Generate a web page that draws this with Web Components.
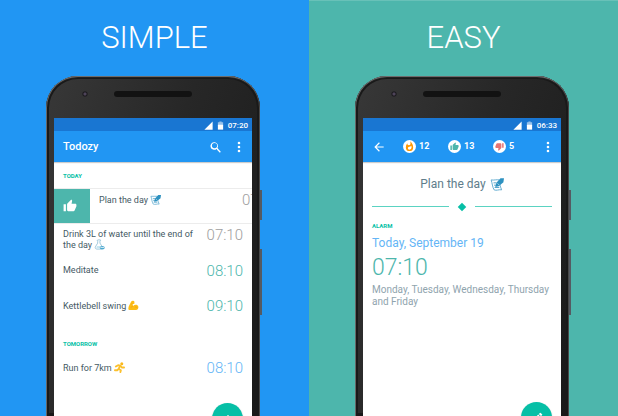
<!DOCTYPE html>
<html lang="en">
<head>
<meta charset="utf-8">
<title>Todozy</title>
<style>
html, body { margin: 0; height: 100%; }
body { font-family: Roboto, "Noto Sans", sans-serif; overflow: hidden; }
</style>
</head>
<body>
<promo-page>
  <promo-panel heading="SIMPLE" style="--bg:#2196f3;--edge:#2196f3">
    <phone-frame clock="07:20" style="--fab-drop:-18px">
      <app-bar slot="bar">
        <app-title>Todozy</app-title>
        <icon-button icon="search" label="Search"></icon-button>
        <icon-button icon="more" label="More options"></icon-button>
      </app-bar>
      <task-list></task-list>
      <fab-button slot="fab" icon="plus" label="Add task"></fab-button>
    </phone-frame>
  </promo-panel>
  <promo-panel heading="EASY" style="--bg:#4db6ac;--edge:#68c1b8">
    <phone-frame clock="06:33" style="--fab-drop:-17px">
      <app-bar slot="bar">
        <icon-button icon="back" label="Back"></icon-button>
        <stat-strip></stat-strip>
        <icon-button icon="more" label="More options"></icon-button>
      </app-bar>
      <task-detail></task-detail>
      <fab-button slot="fab" icon="pencil" label="Edit task"></fab-button>
    </phone-frame>
  </promo-panel>
</promo-page>

<script>
const THUMB = 'M1 21h4V9H1v12zm22-11c0-1.100-.9-2-2-2h-6.310l.95-4.570.03-.32c0-.41-.17-.79-.44-1.060L14.170 1 7.590 7.590C7.220 7.950 7 8.450 7 9v10c0 1.100.9 2 2 2h9c.83 0 1.540-.5 1.840-1.220l3.020-7.050c.09-.23.14-.47.14-.73v-2z';
const ICONS = {
  search: '<path fill="currentColor" d="M15.500 14h-.79l-.28-.27A6.500 6.500 0 1 0 13 15.300l.7.700v.8l5 5 1.500-1.500-4.700-5.300zM9.500 14a4.500 4.500 0 1 1 0-9 4.500 4.500 0 0 1 0 9z"/>',
  more: '<g fill="currentColor"><circle cx="12" cy="5" r="2.200"/><circle cx="12" cy="12" r="2.200"/><circle cx="12" cy="19" r="2.200"/></g>',
  back: '<path fill="currentColor" d="M20 11H7.800l5.600-5.600L12 4l-8 8 8 8 1.400-1.400L7.800 13H20v-2z"/>',
  plus: '<path fill="currentColor" d="M19 13h-6v6h-2v-6H5v-2h6V5h2v6h6v2z"/>',
  pencil: '<path fill="currentColor" d="M3 17.250V21h3.750L17.800 9.900l-3.700-3.700L3 17.250zM20.700 7c.4-.4.4-1 0-1.400l-2.300-2.300a1 1 0 0 0-1.400 0l-1.800 1.800 3.700 3.700L20.700 7z"/>',
  thumb: `<path fill="currentColor" d="${THUMB}"/>`,
  down: `<path fill="currentColor" transform="rotate(180 12 12)" d="${THUMB}"/>`,
  flame: '<path fill="currentColor" d="M13.500.7s.7 2.600.7 4.800c0 2-1.300 3.700-3.400 3.700S7.200 7.500 7.200 5.500v-.4A13 13 0 0 0 4 14a8 8 0 0 0 16 0c0-5.400-2.600-10.200-6.500-13.300zM11.700 19c-1.800 0-3.200-1.400-3.200-3.100 0-1.600 1-2.800 2.800-3.100 1.800-.4 3.600-1.200 4.600-2.600.4 1.300.6 2.700.6 4.100A4.800 4.800 0 0 1 11.700 19z"/>',
  signal: '<path fill="currentColor" d="M1 23L23 1v22z"/>',
  battery: '<path fill="#fff" fill-opacity=".55" d="M9 1h6v2h4v9H5V3h4z"/><path fill="#fff" d="M5 10h14v13H5z"/>',
  memo: '<path fill="#fff" stroke="#5ba9cf" stroke-width="1.600" d="M2 5c5 1 9-1 14 0 0 6 1 10 4 17-5-1-9 2-13 0C4 17 4 11 2 5z"/><path stroke="#4b9fc8" stroke-width="1.600" fill="none" d="M6 10h5M7 14h4M8 18h8"/><path fill="#2d91c0" d="M9 17l2-7 7-8 6 0-1 7-8 7z"/><path stroke="#fff" d="M13 11l3 3"/>',
  bottle: '<path fill="#fff" stroke="#78b2cd" stroke-width="1.500" d="M8 2h6v2l-1 1v4l5 8c1 3-1 5-3 5H6c-3 0-4-3-3-5l5-8V5L7 4z"/><path fill="#c9e7f2" d="M6 15h8l2 5H5z"/><ellipse cx="18" cy="19" rx="5.500" ry="3.800" fill="#4ba8cf"/><path fill="#fff" d="M14 18h8v1.500h-8z"/>',
  arm: '<path fill="#fcbd17" d="M2 13L7 3c2-2 6-2 7 1v4l-4 1 1 4c4-4 9-3 11 0 2 5-1 9-6 9H2c-2-2-1-6 0-9z"/><path stroke="#ed9a12" stroke-width="1.500" fill="none" d="M10 8l-3 1M10 13c-1 2-2 3-4 3M15 16c2-2 4-1 5 1"/>',
  runner: '<circle cx="17" cy="4" r="3.300" fill="#fbb81b"/><path fill="none" stroke="#fbc02d" stroke-width="4" stroke-linejoin="round" stroke-linecap="round" d="M4 10l5-3 5 1 3 4 5 0M13 9l-3 6 5 3-1 4M10 15l-3 3H2"/>'
};
const icon = n => `<svg class="i i-${n}" viewBox="0 0 24 24" aria-hidden="true">${ICONS[n]}</svg>`;
function define(name, render) {
  customElements.define(name, class extends HTMLElement {
    constructor() { super(); this.attachShadow({ mode: 'open' }); }
    connectedCallback() {
      const t = document.createElement('template');
      t.innerHTML = '<style>*{box-sizing:border-box}.i{display:block;flex:none}</style>' + render(this);
      this.shadowRoot.replaceChildren(t.content.cloneNode(true));
    }
  });
}
const at = (el, n) => el.getAttribute(n) || '';

define('promo-page', () => `<style>
:host{display:grid;grid-template-columns:1fr 1fr;height:100vh}
</style><slot></slot>`);

define('promo-panel', el => `<style>
:host{display:flex;flex-direction:column;min-height:0;overflow:hidden;background:var(--bg);box-shadow:inset 0 1px var(--edge)}
h1{margin:0;padding:19px 0;font-size:31px;line-height:38px;font-weight:350;color:#fff;text-align:center}
div{flex:1;min-height:0;display:flex;padding:0 49px 0 46px}
</style><h1>${at(el, 'heading')}</h1><div><slot></slot></div>`);

define('phone-frame', el => `<style>
:host{flex:1;display:flex;flex-direction:column;position:relative;min-width:0;padding:0 8px;
 border-radius:32px 32px 0 0;background:linear-gradient(110deg,#383838,#272727 45%,#191919);
 box-shadow:inset 0 2px 1px -1px #777,inset 1px 0 #666,inset -1px 0 #484848,inset 0 0 0 3px #191919}
.top{height:42px;flex:none;display:grid;grid-template-columns:1fr 78px 1fr;align-items:center;padding-bottom:6px}
.cam{width:6px;height:6px;border-radius:50%;justify-self:center;margin-left:2px;background:radial-gradient(#4e4459 20%,#1d1b1f 50%,#3f3f41)}
.spk{height:6px;border-radius:3px;background:radial-gradient(#292929 30%,#121212 50%) 0 0/2px 2px}
.side{position:absolute;left:100%;width:2px;background:#555a62}
.power{top:114px;height:30px}.vol{top:173px;height:66px}
.screen{flex:1;min-height:0;display:flex;flex-direction:column;position:relative;overflow:hidden;background:#fff}
.status{height:13px;flex:none;display:flex;align-items:center;justify-content:flex-end;gap:3px;padding:1px 4px 0 0;background:#1976d2;color:#fff;font-size:8px;line-height:13px;font-weight:500}
.i{width:9px;height:9px}
.fab{position:absolute;right:9px;bottom:var(--fab-drop)}
</style>
<div class="top"><span class="cam"></span><span class="spk"></span></div>
<span class="side power"></span><span class="side vol"></span>
<div class="screen"><div class="status">${icon('signal')}${icon('battery')}<span>${at(el, 'clock')}</span></div>
<slot name="bar"></slot><slot></slot><div class="fab"><slot name="fab"></slot></div></div>`);

define('app-bar', () => `<style>
:host{display:flex;flex:none;align-items:center;height:31px;padding:0 6px 0 9px;gap:9px;background:#2196f3;color:#fff;box-shadow:0 1px 1px #0003}
</style><slot></slot>`);

define('app-title', () => `<style>
:host{flex:1}h2{margin:0;font-size:11px;line-height:16px;font-weight:500}
</style><h2><slot></slot></h2>`);

define('icon-button', el => `<style>
:host{display:block}
button{display:block;border:0;padding:0;background:none;color:inherit}
.i{width:14px;height:14px}
</style><button aria-label="${at(el, 'label')}">${icon(at(el, 'icon'))}</button>`);

define('fab-button', el => `<style>
:host{display:block}
button{display:grid;place-items:center;width:31px;height:31px;border:0;border-radius:50%;padding:0;background:#06bfa6;color:#fff;box-shadow:0 1px 2px #0003}
.i{width:14px;height:14px}
</style><button aria-label="${at(el, 'label')}">${icon(at(el, 'icon'))}</button>`);

define('stat-strip', () => `<style>
:host{flex:1;display:grid;grid-template-columns:1fr 1fr 39px;padding-left:8px}
span{display:flex;align-items:center;gap:3px;font-size:9px;line-height:13px;font-weight:700}
b{display:grid;place-items:center;width:13px;height:13px;border-radius:50%;background:#fff}
.i{width:9px;height:9px}.i-flame{width:11px;height:11px}
</style>
<span><b style="color:#ff9800">${icon('flame')}</b>12</span>
<span><b style="color:#4db6ac">${icon('thumb')}</b>13</span>
<span><b style="color:#e57373">${icon('down')}</b>5</span>`);

define('task-row', el => `<style>
:host{display:flex;justify-content:space-between;align-items:flex-start;height:35px;padding:5px 9px 0;color:#455a64;font-size:9px;line-height:11px}
:host([lines="2"]){line-height:10px}
p{margin:0;width:132px;padding-top:1px}
time{font-size:15px;line-height:15px;font-weight:300;color:var(--time)}
.i{display:inline-block;width:11px;height:11px;vertical-align:-2px}
:host([swiped]){padding:0;height:36px;border:solid #ececec;border-width:1px 0;overflow:hidden}
:host([swiped]) p{flex:none;width:152px;padding:5px 0 0 9px}
:host([swiped]) time{flex:none;padding-top:4px}
.done{display:grid;flex:none;width:36px;height:34px;border:0;padding:0 0 0 9px;align-items:center;background:#4db6ac;color:#fff}
.done .i{display:block;width:14px;height:14px}
</style>
${el.hasAttribute('swiped') ? `<button class="done" aria-label="Mark as done">${icon('thumb')}</button>` : ''}
<p><slot></slot> ${at(el, 'emoji') ? icon(at(el, 'emoji')) : ''}</p><time>${at(el, 'at')}</time>`);

define('task-list', () => `<style>
:host{display:block;flex:1;min-height:0}
h3{margin:0;padding:10px 9px 8px;font-size:6px;line-height:8px;font-weight:700;color:#06bfa6}
.later{padding:11px 9px 8px}
task-row{--time:#4db6ac}
</style>
<h3>TODAY</h3>
<task-row swiped at="07:10" emoji="memo" style="--time:#9e9e9e">Plan the day</task-row>
<task-row lines="2" at="07:10" emoji="bottle" style="--time:#9e9e9e;padding-top:4px">Drink 3L of water until the end of the day</task-row>
<task-row at="08:10">Meditate</task-row>
<task-row at="09:10" emoji="arm">Kettlebell swing</task-row>
<h3 class="later">TOMORROW</h3>
<task-row at="08:10" emoji="runner" style="--time:#64b5f6">Run for 7km</task-row>`);

define('task-detail', () => `<style>
:host{display:block;flex:1;min-height:0;padding:14px 9px 0}
h2{display:flex;justify-content:center;align-items:center;gap:4px;margin:0;font-size:12px;line-height:16px;font-weight:400;color:#607d8b}
.i{width:14px;height:14px}
.rule{display:flex;align-items:center;gap:13px;height:9px;margin:10px 0 11px}
.rule::before,.rule::after{content:"";flex:1;height:1px;background:#5bd3c2}
.rule i{width:6px;height:6px;margin:0 -3px;background:#06bfa6;transform:rotate(45deg)}
h3{margin:0;font-size:6px;line-height:8px;font-weight:700;color:#06bfa6}
.day{margin:5px 0 0;font-size:12px;line-height:16px;color:#64b5f6}
time{display:block;margin-top:4px;font-size:23px;line-height:26px;font-weight:300;color:#4db6ac}
.days{margin:3px 0 0;font-size:10px;line-height:12px;color:#90a4ae}
</style>
<h2>Plan the day ${icon('memo')}</h2>
<div class="rule"><i></i></div>
<h3>ALARM</h3>
<p class="day">Today, September 19</p>
<time>07:10</time>
<p class="days">Monday, Tuesday, Wednesday, Thursday and Friday</p>`);
</script>
</body>
</html>
